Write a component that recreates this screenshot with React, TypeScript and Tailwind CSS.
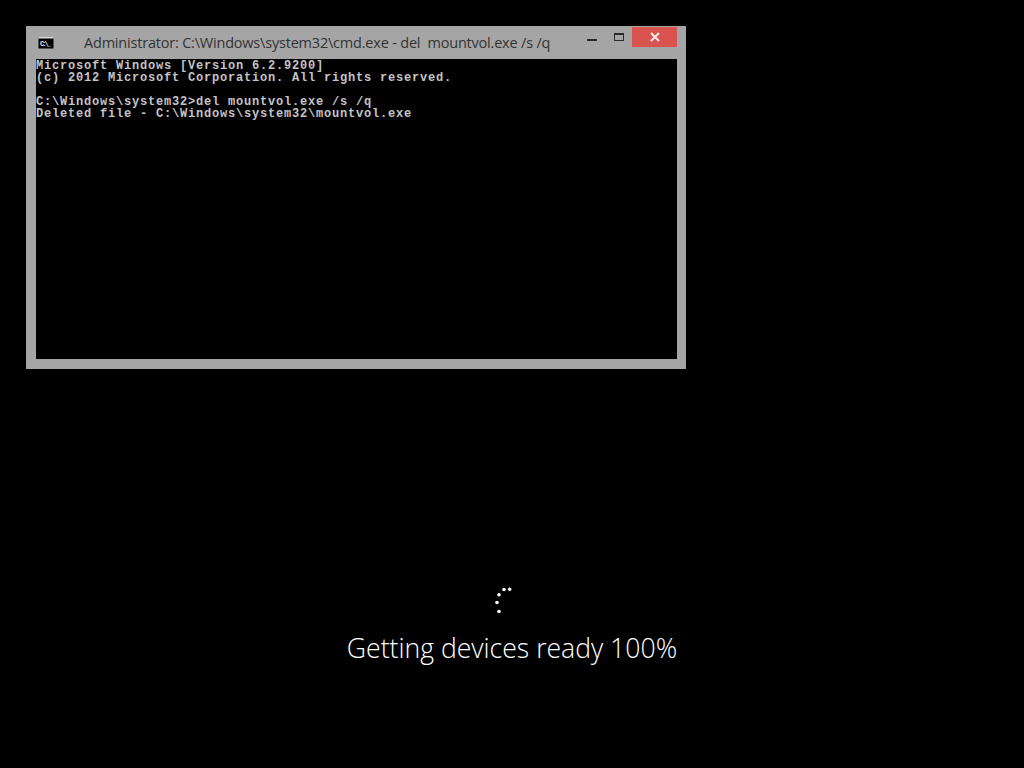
import React from 'react';

const consoleLines = [
  'Microsoft Windows [Version 6.2.9200]',
  '(c) 2012 Microsoft Corporation. All rights reserved.',
  '',
  'C:\\Windows\\system32>del mountvol.exe /s /q',
  'Deleted file - C:\\Windows\\system32\\mountvol.exe',
];

const CmdIcon = () => (
  <svg width="16" height="12" viewBox="0 0 16 12" className="shrink-0">
    <rect width="15" height="11" x="0.5" y="0.5" fill="#000" />
    <rect width="15" height="1.5" x="0.5" y="0" fill="#d8d8d8" />
    <text x="2" y="9" fontSize="7" fontWeight="700" fill="#e8e8e8" fontFamily="'Liberation Mono', monospace" textLength="11">C:\_</text>
  </svg>
);

const Spinner = () => (
  <svg width="20" height="30" viewBox="0 0 20 30" className="block">
    <circle cx="12" cy="3.5" r="1.8" fill="#fff" />
    <circle cx="17.7" cy="3.2" r="1.8" fill="#fff" />
    <circle cx="7" cy="8.8" r="1.8" fill="#fff" />
    <circle cx="5" cy="16.5" r="1.8" fill="#fff" />
    <circle cx="7" cy="25.5" r="1.8" fill="#fff" />
  </svg>
);

export default function App() {
  return (
    <div className="w-[1024px] h-[768px] bg-black overflow-hidden flex flex-col">
      {/* console window */}
      <div className="ml-[26px] mt-[26px] w-[660px] h-[343px] bg-[#a5a5a5] flex flex-col pl-[10px] pr-[9px] pb-[10px]">
        <div className="h-[33px] flex items-start shrink-0">
          <div className="mt-[11px] ml-[2px]">
            <CmdIcon />
          </div>
          <div className="ml-[30px] mt-[7px] text-[14.5px] leading-[20px] text-[#333333] whitespace-pre font-['Open_Sans',sans-serif] tracking-[-0.2px]">
            {'Administrator: C:\\Windows\\system32\\cmd.exe - del  mountvol.exe /s /q'}
          </div>
          <div className="ml-auto flex items-start">
            <div className="w-[10px] h-[2px] bg-[#2b2b2b] mt-[13px] mr-[17px]" />
            <div className="w-[10px] h-[8px] border border-t-2 border-[#2b2b2b] mt-[7px] mr-[8px]" />
            <div className="w-[45px] h-[20px] mt-[1px] bg-[#d9534f] flex items-center justify-center">
              <svg width="10" height="10" viewBox="0 0 10 10">
                <path d="M1 1 L9 9 M9 1 L1 9" stroke="#f8ecec" strokeWidth="2" />
              </svg>
            </div>
          </div>
        </div>
        <div className="flex-1 bg-black text-[#c4c4c4] font-['Liberation_Mono',monospace] font-bold text-[12px] tracking-[0.8px] leading-[12px] whitespace-pre pt-px">
          {consoleLines.map((line, i) => (
            <div key={i} className="h-[12px]">{line}</div>
          ))}
        </div>
      </div>

      {/* boot progress */}
      <div className="flex flex-col items-center">
        <div className="mt-[217px] ml-[-20px] w-[20px]">
          <Spinner />
        </div>
        <div className="mt-[13px] text-[26.6px] leading-[38px] font-light text-white font-['Open_Sans',sans-serif]">
          Getting devices ready 100%
        </div>
      </div>
    </div>
  );
}
